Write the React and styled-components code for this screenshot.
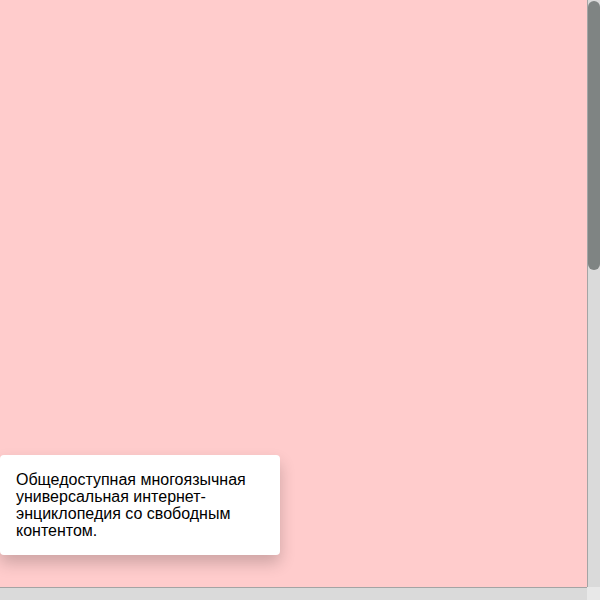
import React from 'react'
import styled, { createGlobalStyle } from 'styled-components'

const GlobalStyle = createGlobalStyle`
  body {
    margin: 0;
    font-family: "Liberation Sans", Arial, sans-serif;
  }
`

// window frame: viewport + drawn scrollbars
const Frame = styled.div`
  display: grid;
  grid-template-columns: 587px 13px;
  grid-template-rows: 587px 13px;
  width: 600px;
  height: 600px;
  overflow: hidden;
`

const Viewport = styled.div`
  position: relative;
  background: #ffcccc;
`

const Track = styled.div`
  background: #dadada;
  border-left: ${p => (p.vertical ? '1px solid #a4a4a4' : 'none')};
  border-top: ${p => (p.vertical ? 'none' : '1px solid #a4a4a4')};
  padding-top: ${p => (p.vertical ? '1px' : '0')};
`

const Thumb = styled.div`
  width: 12px;
  height: 269px;
  border-radius: 6px;
  background: #7f8483;
`

const Corner = styled.div`
  background: #e8e8e8;
`

const Toast = styled.div`
  position: absolute;
  left: 0;
  bottom: 32px;
  width: 280px;
  box-sizing: border-box;
  padding: 16px;
  background: #fff;
  border-radius: 4px;
  box-shadow: 0 8px 16px rgba(0, 0, 0, 0.2);
  color: #000;
  font-size: 16px;
  line-height: 17px;
`

export default function App() {
  return (
    <>
      <GlobalStyle />
      <Frame>
        <Viewport>
          <Toast>
            Общедоступная многоязычная универсальная интернет-энциклопедия со свободным контентом.
          </Toast>
        </Viewport>
        <Track vertical>
          <Thumb />
        </Track>
        <Track />
        <Corner />
      </Frame>
    </>
  )
}
